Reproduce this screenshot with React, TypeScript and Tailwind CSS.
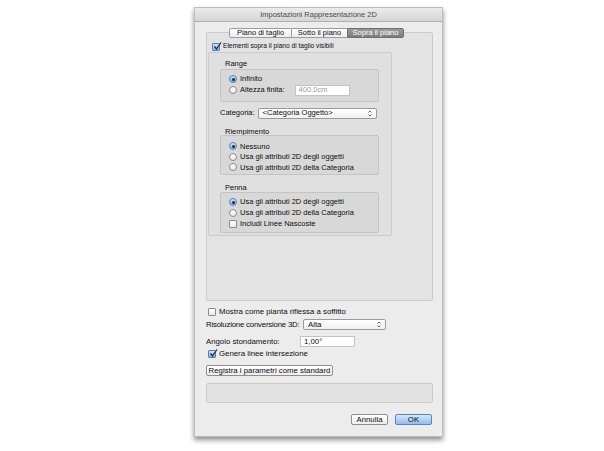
import React from 'react'

const font = 'font-["Liberation_Sans",Arial,sans-serif]'

function Radio({ on }: { on?: boolean }) {
  return (
    <span
      className={`inline-flex items-center justify-center w-[8px] h-[8px] rounded-full border shrink-0 ${
        on ? 'border-[#5a7fb8] bg-[linear-gradient(#cfe3fb,#7fb0ec)]' : 'border-[#8c8c8c] bg-[linear-gradient(#ffffff,#e9e9e9)]'
      }`}
    >
      {on && <span className="w-[3px] h-[3px] rounded-full bg-[#1b2a40]" />}
    </span>
  )
}

function Check({ on }: { on?: boolean }) {
  return (
    <span
      className={`relative inline-block w-[8px] h-[8px] rounded-[1px] border shrink-0 ${
        on ? 'border-[#5a7fb8] bg-[linear-gradient(#cfe3fb,#7fb0ec)]' : 'border-[#8c8c8c] bg-[linear-gradient(#ffffff,#e9e9e9)]'
      }`}
    >
      {on && (
        <svg className="absolute left-[0px] top-[-2px]" width="9" height="9" viewBox="0 0 9 9">
          <path d="M1.5 4.5 L3.5 7 L8 0.5" fill="none" stroke="#1b2a40" strokeWidth="1.3" />
        </svg>
      )}
    </span>
  )
}

function Row({ children, label, on, check, h = 'h-[11px]', text = '' }: { children?: React.ReactNode; label: string; on?: boolean; check?: boolean; h?: string; text?: string }) {
  return (
    <div className={`flex items-center gap-[3px] ${h}`}>
      {check ? <Check on={on} /> : <Radio on={on} />}
      <span className={`whitespace-nowrap ${text}`}>{label}</span>
      {children}
    </div>
  )
}

function Popup({ value, w }: { value: string; w: string }) {
  return (
    <div className={`${w} h-[11px] flex items-center justify-between px-[4px] bg-[linear-gradient(#ffffff,#f0f0f0)] border border-[#9a9a9a] rounded-[2px]`}>
      <span>{value}</span>
      <svg width="4" height="7" viewBox="0 0 4 7">
        <path d="M0.5 2.5 L2 1 L3.5 2.5 M0.5 4.5 L2 6 L3.5 4.5" fill="none" stroke="#444" strokeWidth="0.8" />
      </svg>
    </div>
  )
}

function Btn({ label, w, def }: { label: string; w: string; def?: boolean }) {
  return (
    <div
      className={`${w} h-[11px] flex items-center justify-center border rounded-[2px] whitespace-nowrap ${
        def ? 'border-[#5d83bb] bg-[linear-gradient(#d6e7fb,#8fbdf0)]' : 'border-[#8e8e8e] bg-[linear-gradient(#ffffff,#ededed)]'
      }`}
    >
      {label}
    </div>
  )
}

export default function App() {
  return (
    <div className={`w-[604px] h-[451px] bg-white overflow-hidden ${font} text-[7.8px] leading-none text-[#0d0d0d]`}>
      <div className="ml-[194px] mt-[7px] w-[249px] h-[430px] bg-[#ececec] flex flex-col shadow-[0_3px_5px_rgba(0,0,0,0.45)] border border-[#bdbdbd]">
        {/* Title bar */}
        <div className="h-[14px] shrink-0 flex items-center justify-center bg-[linear-gradient(#ebebeb,#d5d5d5)] border-b border-[#b0b0b0] text-[#4a4a4a] text-[7.5px]">
          Impostazioni Rappresentazione 2D
        </div>

        {/* Tabs + box */}
        <div className="ml-[11px] mt-[6px] w-[227px] flex flex-col text-[7.5px]">
          <div className="relative z-10 ml-[23px] flex h-[10px] w-[175px]">
            <div className="w-[63px] flex items-center justify-center border border-[#9c9c9c] rounded-l-[2px] bg-[linear-gradient(#ffffff,#ececec)]">
              Piano di taglio
            </div>
            <div className="w-[55px] flex items-center justify-center border-y border-[#9c9c9c] bg-[linear-gradient(#ffffff,#ececec)]">
              Sotto il piano
            </div>
            <div className="w-[57px] flex items-center justify-center border border-[#6f6f6f] rounded-r-[2px] bg-[linear-gradient(#9b9b9b,#7c7c7c)] text-white">
              Sopra il piano
            </div>
          </div>
          <div className="-mt-[6px] h-[269px] bg-[#e3e3e3] border border-[#cbcbcb] rounded-[2px] flex flex-col">
            <div className="ml-[5px] mt-[8px]">
              <Row label="Elementi sopra il piano di taglio visibili" on check text="text-[6.6px]" />
            </div>
            <div className="ml-[1px] w-[184px] h-[184px] bg-[#e0e0e0] border border-[#cacaca] rounded-[2px] flex flex-col px-[11px]">
              <div className="ml-[5px] mt-[7px]">Range</div>
              <div className="mt-[1px] w-[159px] h-[33px] bg-[#d8d8d8] border border-[#c4c4c4] rounded-[2px] flex flex-col pl-[8px] pt-[4px]">
                <Row label="Infinito" on />
                <Row label="Altezza finita:">
                  <div className="ml-[7px] w-[55px] h-[11px] bg-white border border-[#c3c3c3] flex items-center px-[3px] text-[#9a9a9a]">400,0cm</div>
                </Row>
              </div>
              <div className="mt-[6px] flex items-center gap-[3px]">
                <span>Categoria:</span>
                <Popup value="<Categoria Oggetto>" w="w-[119px]" />
              </div>
              <div className="ml-[5px] mt-[9px]">Riempimento</div>
              <div className="w-[159px] h-[40px] bg-[#d8d8d8] border border-[#c4c4c4] rounded-[2px] flex flex-col pl-[8px] pt-[5px]">
                <Row label="Nessuno" on h="h-[10.5px]" />
                <Row label="Usa gli attributi 2D degli oggetti" h="h-[10.5px]" />
                <Row label="Usa gli attributi 2D della Categoria" h="h-[10.5px]" />
              </div>
              <div className="ml-[5px] mt-[9px]">Penna</div>
              <div className="w-[159px] h-[41px] bg-[#d8d8d8] border border-[#c4c4c4] rounded-[2px] flex flex-col pl-[8px] pt-[4px]">
                <Row label="Usa gli attributi 2D degli oggetti" on />
                <Row label="Usa gli attributi 2D della Categoria" />
                <Row label="Includi Linee Nascoste" check />
              </div>
            </div>
          </div>
        </div>

        {/* Bottom options */}
        <div className="ml-[13px] mt-[5px]">
          <Row label="Mostra come pianta riflessa a soffitto" check />
        </div>
        <div className="ml-[11px] mt-[2px] flex items-center">
          <span className="w-[97px] whitespace-nowrap tracking-[-0.2px]">Risoluzione conversione 3D:</span>
          <Popup value="Alta" w="w-[83px]" />
        </div>
        <div className="ml-[11px] mt-[6px] flex items-center">
          <span className="w-[94px] whitespace-nowrap">Angolo stondamento:</span>
          <div className="w-[55px] h-[11px] bg-white border border-[#c3c3c3] flex items-center px-[3px]">1,00°</div>
        </div>
        <div className="ml-[13px] mt-[1px]">
          <Row label="Genera linee intersezione" on check />
        </div>
        <div className="ml-[11px] mt-[6px]">
          <Btn label="Registra i parametri come standard" w="w-[127px]" />
        </div>
        <div className="ml-[11px] mt-[7px] w-[227px] h-[20px] bg-[#e2e2e2] border border-[#cbcbcb] rounded-[2px]" />
        <div className="mt-[11px] mr-[10px] flex justify-end gap-[7px]">
          <Btn label="Annulla" w="w-[37px]" />
          <Btn label="OK" w="w-[37px]" def />
        </div>
      </div>
    </div>
  )
}
